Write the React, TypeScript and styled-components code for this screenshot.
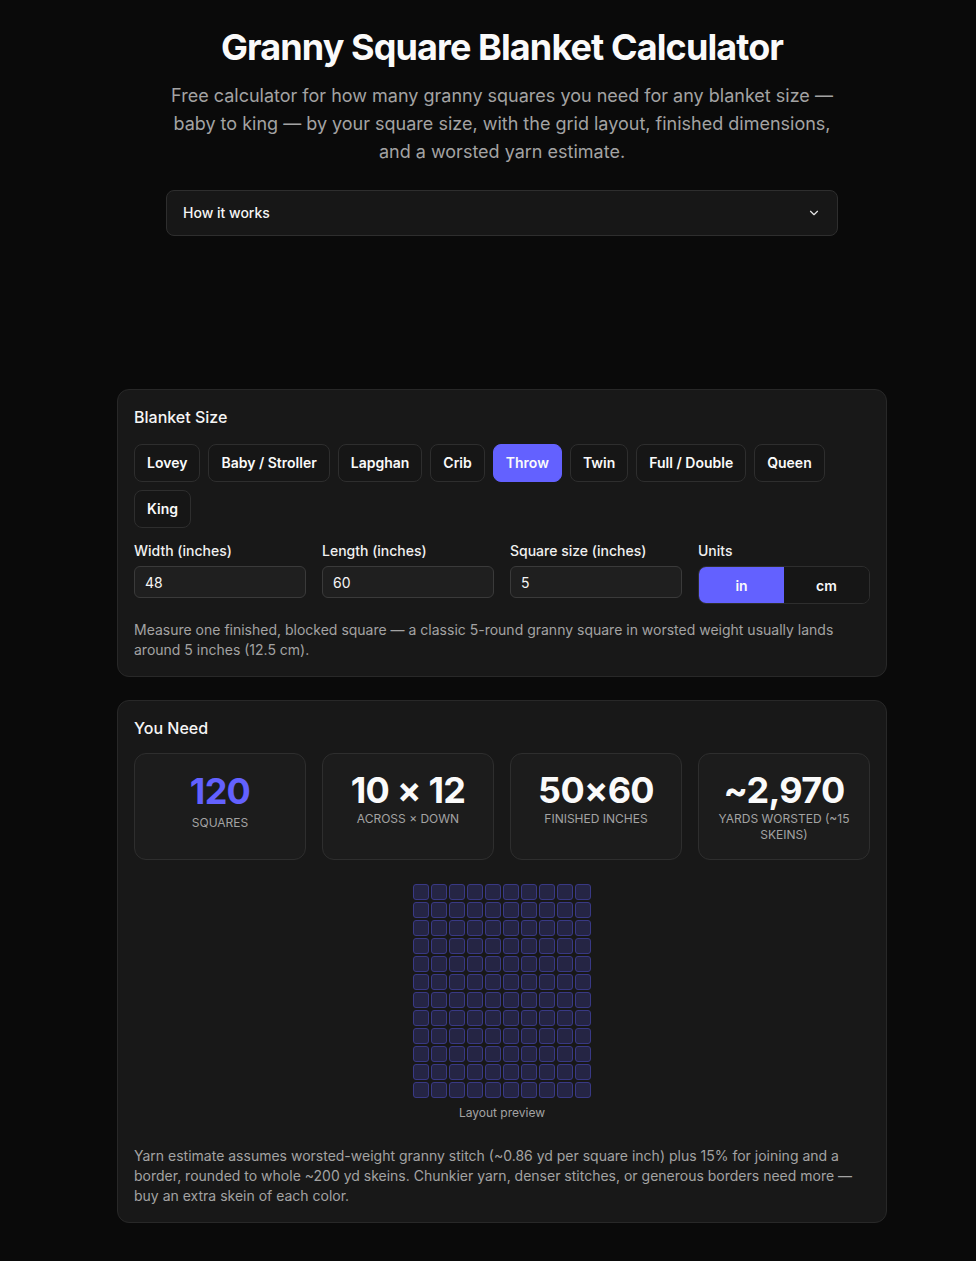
import styled, { createGlobalStyle } from "styled-components";

const ACCENT = "#6361ff";

const GlobalStyle = createGlobalStyle`
  * { box-sizing: border-box; }
  body {
    margin: 0;
    background: #0a0a0a;
    color: #f5f5f5;
    font-family: Inter, "Noto Sans", "Liberation Sans", sans-serif;
  }
`;

const Page = styled.div`
  padding: 27px 0 40px 28px;
  display: flex;
  flex-direction: column;
  align-items: center;
`;

const Header = styled.header`
  width: 672px;
  display: flex;
  flex-direction: column;
  align-items: center;
  text-align: center;
`;

const Title = styled.h1`
  margin: 0;
  font-size: 36px;
  line-height: 40px;
  font-weight: 700;
  letter-spacing: -0.025em;
  color: #fafafa;
`;

const Subtitle = styled.p`
  margin: 15px 0 0;
  font-size: 18px;
  line-height: 28px;
  color: #a3a3a3;
`;

const Accordion = styled.button`
  margin-top: 24px;
  width: 672px;
  height: 46px;
  padding: 0 16px;
  display: flex;
  align-items: center;
  justify-content: space-between;
  background: #171717;
  border: 1px solid #2e2e2e;
  border-radius: 8px;
  color: #f5f5f5;
  font: 500 14px/20px Inter, sans-serif;
`;

const Card = styled.section`
  width: 770px;
  margin-top: ${(p: { $top: number }) => p.$top}px;
  padding: 15px 16px 16px;
  background: #181818;
  border: 1px solid #282828;
  border-radius: 12px;
`;

const CardTitle = styled.h2`
  margin: 0 0 15px;
  font-size: 16px;
  line-height: 24px;
  font-weight: 500;
  color: #f5f5f5;
`;

const Chips = styled.div`
  display: flex;
  flex-wrap: wrap;
  gap: 8px;
`;

const Chip = styled.button<{ $active?: boolean }>`
  height: 38px;
  padding: 0 12px;
  border-radius: 8px;
  border: 1px solid ${(p) => (p.$active ? ACCENT : "#2e2e2e")};
  background: ${(p) => (p.$active ? ACCENT : "#161616")};
  color: #fafafa;
  font: 600 14px/20px Inter, sans-serif;
`;

const Fields = styled.div`
  margin-top: 13px;
  display: grid;
  grid-template-columns: repeat(4, minmax(0, 1fr));
  gap: 16px;
`;

const Field = styled.label`
  display: flex;
  flex-direction: column;
  gap: 5px;
  min-width: 0;
  font-size: 14px;
  line-height: 20px;
  font-weight: 500;
  color: #f0f0f0;
`;

const Input = styled.input`
  width: 100%;
  height: 32px;
  padding: 0 10px;
  background: #1f1f1f;
  border: 1px solid #3a3a3a;
  border-radius: 6px;
  color: #f5f5f5;
  font: 400 14px Inter, sans-serif;
`;

const Toggle = styled.div`
  display: grid;
  grid-template-columns: 1fr 1fr;
  width: 100%;
  height: 38px;
  border: 1px solid #2e2e2e;
  border-radius: 8px;
  overflow: hidden;
`;

const ToggleBtn = styled.button<{ $active?: boolean }>`
  border: 0;
  background: ${(p) => (p.$active ? ACCENT : "#161616")};
  color: #fafafa;
  font: 600 14px Inter, sans-serif;
`;

const Hint = styled.p`
  margin: 16px 0 0;
  font-size: 14px;
  line-height: 20px;
  color: #a3a3a3;
`;

const Stats = styled.div`
  display: grid;
  grid-template-columns: repeat(4, minmax(0, 1fr));
  gap: 16px;
  margin-top: -2px;
`;

const Stat = styled.div`
  padding: 16px 12px;
  background: #1c1c1c;
  border: 1px solid #2e2e2e;
  border-radius: 12px;
  text-align: center;
`;

const StatValue = styled.div<{ $accent?: boolean }>`
  font-size: 36px;
  line-height: 40px;
  font-weight: 700;
  letter-spacing: -0.02em;
  color: ${(p) => (p.$accent ? ACCENT : "#fafafa")};
  margin-top: ${(p) => (p.$accent ? "1px" : "0")};
`;

const StatLabel = styled.div`
  margin-top: ${(p: { $gap: number }) => p.$gap}px;
  font-size: 12px;
  line-height: 16px;
  text-transform: uppercase;
  color: #a3a3a3;
`;

const Preview = styled.figure`
  margin: 24px 0 0;
  display: flex;
  flex-direction: column;
  align-items: center;
`;

const Grid = styled.div<{ $cols: number }>`
  display: grid;
  grid-template-columns: repeat(${(p) => p.$cols}, 16px);
  grid-auto-rows: 16px;
  gap: 2px;
`;

const Cell = styled.div`
  background: #252544;
  border: 1px solid #393985;
  border-radius: 3px;
`;

const Caption = styled.figcaption`
  margin-top: 7px;
  font-size: 12px;
  line-height: 16px;
  color: #a3a3a3;
`;

const Footnote = styled(Hint)`
  margin-top: 25px;
`;

const sizes = ["Lovey", "Baby / Stroller", "Lapghan", "Crib", "Throw", "Twin", "Full / Double", "Queen", "King"];

const stats = [
  { value: "120", label: "Squares", accent: true, gap: 4 },
  { value: "10 × 12", label: "Across × Down", gap: 1 },
  { value: "50×60", label: "Finished inches", gap: 1 },
  { value: "~2,970", label: "Yards worsted (~15 skeins)", gap: 1 },
];

function Chevron() {
  return (
    <svg width="14" height="14" viewBox="0 0 24 24" fill="none" stroke="#e5e5e5" strokeWidth="2" strokeLinecap="round" strokeLinejoin="round">
      <path d="m6 9 6 6 6-6" />
    </svg>
  );
}

export default function App() {
  return (
    <>
      <GlobalStyle />
      <Page>
        <Header>
          <Title>Granny Square Blanket Calculator</Title>
          <Subtitle>
            Free calculator for how many granny squares you need for any blanket size — baby to king — by your square
            size, with the grid layout, finished dimensions, and a worsted yarn estimate.
          </Subtitle>
          <Accordion>
            How it works
            <Chevron />
          </Accordion>
        </Header>

        <Card $top={153}>
          <CardTitle>Blanket Size</CardTitle>
          <Chips>
            {sizes.map((s) => (
              <Chip key={s} $active={s === "Throw"}>
                {s}
              </Chip>
            ))}
          </Chips>
          <Fields>
            <Field>
              Width (inches)
              <Input defaultValue="48" />
            </Field>
            <Field>
              Length (inches)
              <Input defaultValue="60" />
            </Field>
            <Field>
              Square size (inches)
              <Input defaultValue="5" />
            </Field>
            <Field as="div">
              Units
              <Toggle>
                <ToggleBtn $active>in</ToggleBtn>
                <ToggleBtn>cm</ToggleBtn>
              </Toggle>
            </Field>
          </Fields>
          <Hint>
            Measure one finished, blocked square — a classic 5-round granny square in worsted weight usually lands
            around 5 inches (12.5 cm).
          </Hint>
        </Card>

        <Card $top={23}>
          <CardTitle>You Need</CardTitle>
          <Stats>
            {stats.map((s) => (
              <Stat key={s.label}>
                <StatValue $accent={s.accent}>{s.value}</StatValue>
                <StatLabel $gap={s.gap}>{s.label}</StatLabel>
              </Stat>
            ))}
          </Stats>
          <Preview>
            <Grid $cols={10}>
              {Array.from({ length: 120 }, (_, i) => (
                <Cell key={i} />
              ))}
            </Grid>
            <Caption>Layout preview</Caption>
          </Preview>
          <Footnote>
            Yarn estimate assumes worsted-weight granny stitch (~0.86 yd per square inch) plus 15% for joining and a
            border, rounded to whole ~200 yd skeins. Chunkier yarn, denser stitches, or generous borders need more —
            buy an extra skein of each color.
          </Footnote>
        </Card>
      </Page>
    </>
  );
}
